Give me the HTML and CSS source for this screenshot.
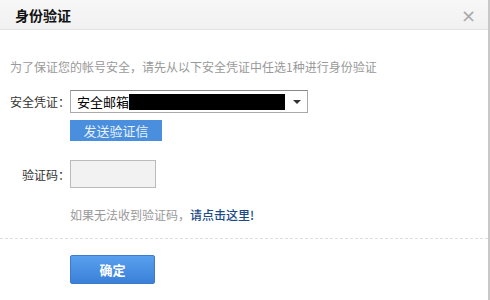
FILE: index.html
```html
<!DOCTYPE html>
<html lang="zh">
<head>
<meta charset="utf-8">
<link rel="stylesheet" href="styles.css">
</head>
<body>
<div class="dialog">
  <div class="header">
    <span class="title">身份验证</span>
    <span class="close">×</span>
  </div>
  <div class="body">
    <p class="desc">为了保证您的帐号安全，请先从以下安全凭证中任选1种进行身份验证</p>
    <div class="row">
      <span class="label">安全凭证：</span>
      <div class="select">
        <span class="sel-text">安全邮箱</span>
        <span class="redact"></span>
        <span class="arrow"></span>
      </div>
    </div>
    <div class="row send-row">
      <button class="send">发送验证信</button>
    </div>
    <div class="row code-row">
      <span class="label">验证码：</span>
      <div class="code-input"></div>
    </div>
    <p class="help">如果无法收到验证码，<a class="link">请点击这里!</a></p>
  </div>
  <div class="footer">
    <button class="ok">确定</button>
  </div>
</div>
</body>
</html>
```

FILE: styles.css
```css
html, body {
  margin: 0;
  padding: 0;
  background: #fff;
}
body {
  font-family: "Noto Sans CJK SC", "Liberation Sans", sans-serif;
  font-size: 12px;
  color: #333;
}
.dialog {
  width: 488px;
  height: 300px;
  border-right: 2px solid #c8c8c8;
  display: flex;
  flex-direction: column;
}
.header {
  height: 29px;
  background: linear-gradient(#f7f7f7, #f1f1f1);
  border-bottom: 1px solid #e2e2e2;
  display: flex;
  align-items: center;
  justify-content: space-between;
  padding: 0 12px 0 15px;
}
.title {
  font-size: 14px;
  font-weight: bold;
  color: #111;
  line-height: 1;
}
.close {
  font-family: "DejaVu Sans", sans-serif;
  font-size: 18px;
  color: #a8a8a8;
  line-height: 1;
  margin-top: 2px;
}
.body {
  padding: 0 0 0 10px;
  height: 209px;
  border-bottom: 1px dashed #ddd;
  box-sizing: border-box;
}
.desc {
  margin: 29px 0 0 0;
  color: #999;
  line-height: 16px;
}
.row {
  display: flex;
  align-items: center;
}
.desc + .row { margin-top: 15px; }
.label {
  width: 60px;
  text-align: right;
  color: #333;
}
.select {
  width: 230px;
  height: 21px;
  border: 1px solid #aaa;
  border-top-color: #888;
  display: flex;
  align-items: center;
  padding-left: 6px;
  box-sizing: content-box;
}
.sel-text {
  font-size: 13px;
  color: #000;
}
.redact {
  width: 156px;
  height: 16px;
  background: #000;
}
.arrow {
  margin-left: 8px;
  width: 0;
  height: 0;
  border-left: 4px solid transparent;
  border-right: 4px solid transparent;
  border-top: 4px solid #333;
}
.send-row {
  margin-top: 7px;
  padding-left: 60px;
}
.send {
  width: 92px;
  height: 21px;
  border: none;
  background: #4a8fdd;
  color: #e8f1fb;
  font-family: inherit;
  font-size: 13px;
  padding: 0;
  line-height: 21px;
}
.code-row {
  margin-top: 19px;
}
.code-input {
  width: 84px;
  height: 26px;
  background: #f2f2f2;
  border: 1px solid #bbb;
}
.help {
  margin: 19px 0 0 60px;
  color: #999;
  line-height: 16px;
}
.link {
  color: #1b4a86;
  font-weight: 500;
}
.footer {
  padding: 16px 0 0 70px;
}
.ok {
  width: 85px;
  height: 29px;
  border: 1px solid #3d7acc;
  border-radius: 2px;
  background: linear-gradient(#58a0ee, #3b80d8);
  color: #fff;
  font-family: inherit;
  font-size: 13px;
  font-weight: bold;
  padding: 0;
}
```
